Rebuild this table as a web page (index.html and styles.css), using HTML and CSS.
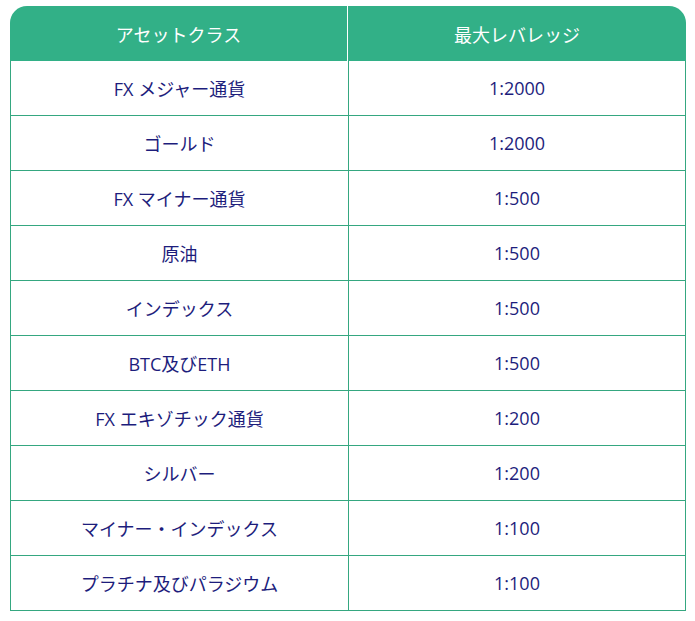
FILE: index.html
```html
<!DOCTYPE html>
<html lang="ja">
<head>
<meta charset="utf-8">
<link rel="stylesheet" href="styles.css">
</head>
<body>
<table class="lev">
  <thead>
    <tr><th>アセットクラス</th><th>最大レバレッジ</th></tr>
  </thead>
  <tbody>
    <tr><td>FX メジャー通貨</td><td>1:2000</td></tr>
    <tr><td>ゴールド</td><td>1:2000</td></tr>
    <tr><td>FX マイナー通貨</td><td>1:500</td></tr>
    <tr><td>原油</td><td>1:500</td></tr>
    <tr><td>インデックス</td><td>1:500</td></tr>
    <tr><td>BTC及びETH</td><td>1:500</td></tr>
    <tr><td>FX エキゾチック通貨</td><td>1:200</td></tr>
    <tr><td>シルバー</td><td>1:200</td></tr>
    <tr><td>マイナー・インデックス</td><td>1:100</td></tr>
    <tr><td>プラチナ及びパラジウム</td><td>1:100</td></tr>
  </tbody>
</table>
</body>
</html>
```
FILE: styles.css
```css
html, body {
  margin: 0;
  padding: 0;
  background: #ffffff;
}
body {
  padding: 6px 9px 0 10px;
  font-family: "Open Sans", "Noto Sans CJK JP", sans-serif;
  font-size: 18px;
}
.lev {
  width: 676px;
  border-collapse: separate;
  border-spacing: 0;
  table-layout: fixed;
}
.lev th {
  background: #32b087;
  color: #ffffff;
  font-weight: 400;
  height: 55px;
  padding: 0;
  text-align: center;
  vertical-align: middle;
}
.lev th:first-child {
  border-top-left-radius: 17px;
  border-right: 1px solid #ffffff;
}
.lev th:last-child {
  border-top-right-radius: 17px;
}
.lev td {
  height: 54px;
  padding: 0;
  text-align: center;
  vertical-align: middle;
  color: #1d1d7c;
  border-bottom: 1px solid #35a780;
  border-left: 1px solid #35a780;
}
.lev td:last-child {
  border-right: 1px solid #35a780;
}
```
